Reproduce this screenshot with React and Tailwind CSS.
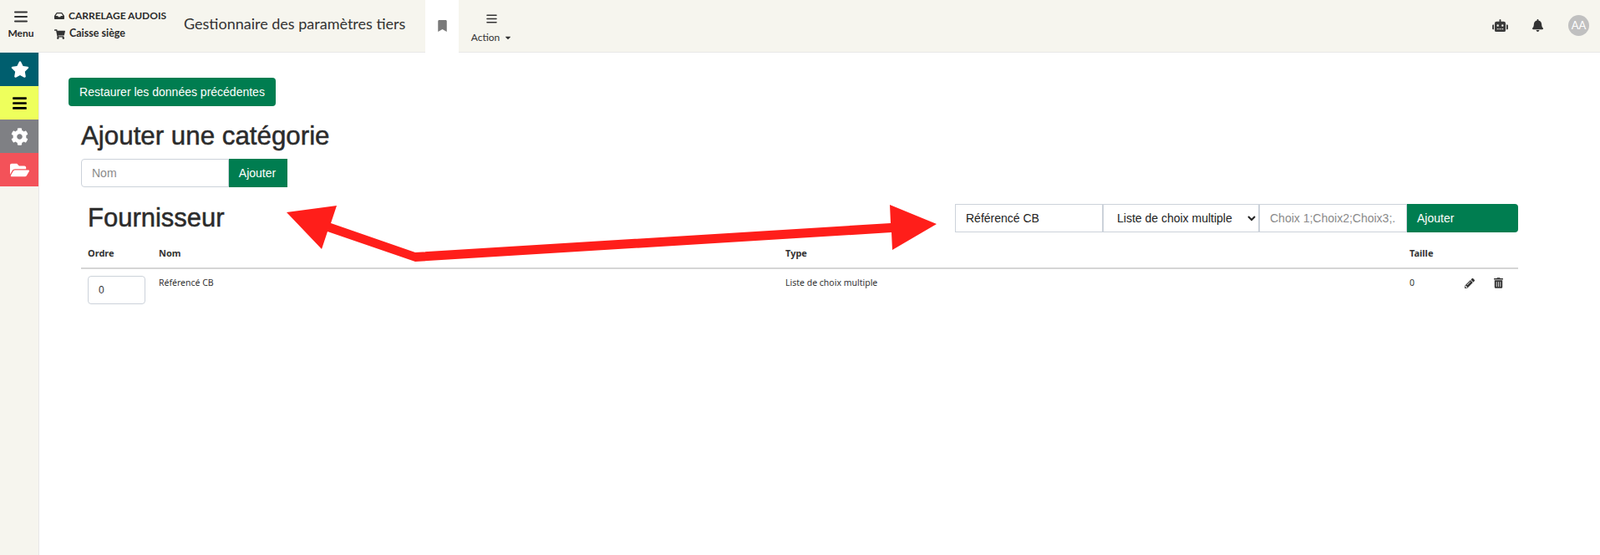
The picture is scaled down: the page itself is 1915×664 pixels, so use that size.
import React from "react";
import { FaStar, FaBars, FaCog, FaFolderOpen, FaBookmark, FaRobot, FaBell, FaPencilAlt, FaTrashAlt, FaInbox, FaShoppingCart, FaCaretDown } from "react-icons/fa";

function Burger({ className }) {
  return (
    <svg viewBox="0 0 16 14" className={className} fill="none" stroke="currentColor" strokeWidth="2" strokeLinecap="round">
      <path d="M1 1.5h14M1 7h14M1 12.5h14" />
    </svg>
  );
}

function Arrow() {
  return (
    <svg viewBox="343 245 778 68" className="absolute left-[343px] top-[245px] w-[778px] h-[68px] pointer-events-none">
      <polygon
        fill="#ff1e1a"
        points="343,254 403,246 396,267 497,302 1066,267 1065,245 1121,268 1068,299 1067,278 497,313 392,277 385,298"
      />
    </svg>
  );
}

const sideItems = [
  { bg: "bg-[#005e6e]", color: "text-white", Icon: FaStar, size: "text-[22px] pl-[1px]" },
  { bg: "bg-[#eeff5c]", color: "text-black", Icon: FaBars, size: "text-[19px]" },
  { bg: "bg-[#7f8084]", color: "text-white", Icon: FaCog, size: "text-[21px]" },
  { bg: "bg-[#f35259]", color: "text-white", Icon: FaFolderOpen, size: "text-[23px]" },
];

export default function App() {
  return (
    <div className="relative min-h-screen bg-white text-[#2b2b2b] font-['Liberation_Sans',sans-serif]">
      <header className="flex h-[63px] items-stretch bg-[#f6f5ee] border-b border-[#e8e8e8] font-['Lato',sans-serif]">
        <div className="w-[50px] flex flex-col items-center pt-[13px]">
          <Burger className="w-[16px] h-[14px] text-[#333]" />
          <span className="mt-[5px] text-[12px] font-bold leading-[15px]">Menu</span>
        </div>
        <div className="ml-[15px] w-[155px] flex flex-col pt-[11px] font-bold">
          <div className="flex items-center h-[15px]">
            <FaInbox className="w-[12px] h-[12px] text-[#333]" />
            <span className="ml-[5px] text-[12px] whitespace-nowrap">CARRELAGE AUDOIS</span>
          </div>
          <div className="flex items-center h-[15px] mt-[7px]">
            <FaShoppingCart className="w-[13px] h-[12px] text-[#333]" />
            <span className="ml-[5px] text-[12.5px] whitespace-nowrap">Caisse siège</span>
          </div>
        </div>
        <div className="w-[289px] flex items-center h-[57px] text-[18px] text-[#333] whitespace-nowrap">
          Gestionnaire des paramètres tiers
        </div>
        <div className="w-[40px] h-[63px] bg-white flex items-center justify-center pb-[1px]">
          <FaBookmark className="w-[11px] h-[14px] text-[#7a7a7a]" />
        </div>
        <div className="ml-[17px] w-[45px] flex flex-col items-center pt-[17px]">
          <Burger className="w-[13px] h-[11px] text-[#333]" />
          <span className="mt-[9px] flex items-center text-[12px] leading-[15px] text-[#333]">
            Action
            <FaCaretDown className="ml-[5px] w-[10px] h-[10px]" />
          </span>
        </div>
        <div className="ml-auto flex items-center pb-[1px] pr-[13px]">
          <FaRobot className="w-[19px] h-[15px] text-[#3a3a3a]" />
          <FaBell className="ml-[29px] w-[13px] h-[15px] text-[#333]" />
          <div className="ml-[30px] w-[25px] h-[25px] rounded-full bg-[#c0c0c0] text-white text-[13px] flex items-center justify-center">
            AA
          </div>
        </div>
      </header>

      <div className="flex min-h-[601px]">
        <aside className="w-[47px] shrink-0 bg-[#f6f5ee] border-r border-[#e8e8e8]">
          {sideItems.map(({ bg, color, Icon, size }, i) => (
            <div key={i} className={`h-[40px] flex items-center justify-center ${bg} ${color} ${size}`}>
              <Icon />
            </div>
          ))}
        </aside>

        <main className="flex-1 pl-[35px] pr-[98px] pt-[30px]">
          <button className="h-[34px] w-[248px] rounded-[4px] bg-[#007d50] text-white text-[14px] flex items-center justify-center">
            Restaurer les données précédentes
          </button>

          <div className="ml-[15px]">
            <h2 className="mt-[14px] mb-[5px] text-[31.3px] leading-[44px] font-normal [-webkit-text-stroke:0.5px_#2b2b2b]">Ajouter une catégorie</h2>
            <div className="flex h-[34px] w-[247px]">
              <input
                placeholder="Nom"
                className="w-[177px] border border-[#ccd2da] rounded-l-[4px] px-3 text-[14px] outline-none placeholder:text-[#8a8a8a]"
              />
              <button className="w-[70px] bg-[#007d50] text-white text-[14px] pr-[2px]">Ajouter</button>
            </div>

            <div className="mt-[20px] flex items-center justify-between h-[34px]">
              <h3 className="pl-[8px] text-[31px] leading-[34px] font-normal [-webkit-text-stroke:0.5px_#2b2b2b]">Fournisseur</h3>
              <div className="flex h-[34px]">
                <input
                  defaultValue="Référencé CB"
                  className="w-[177px] border border-[#ccd2da] px-3 text-[14px] text-[#222] outline-none"
                />
                <select defaultValue="m" className="w-[187px] border border-[#ccd2da] pl-[12px] pr-[2px] text-[14px] text-[#222] bg-white outline-none">
                  <option value="m">Liste de choix multiple</option>
                </select>
                <input
                  placeholder="Choix 1;Choix2;Choix3;..."
                  className="w-[177px] border border-[#ccd2da] px-3 text-[14px] outline-none placeholder:text-[#8a8a8a]"
                />
                <button className="w-[133px] bg-[#007d50] text-white text-[14px] text-left pl-[12px] rounded-r-[4px]">Ajouter</button>
              </div>
            </div>

            <table className="mt-[8px] w-full table-fixed text-[10.5px] font-['Noto_Sans',sans-serif] text-[#333]">
              <thead>
                <tr className="border-b-2 border-[#d5d5d5] h-[35px] text-[11px]">
                  <th className="w-[85px] pl-[8px] text-left font-bold">Ordre</th>
                  <th className="w-[750px] pl-[8px] text-left font-bold">Nom</th>
                  <th className="w-[747px] pl-[8px] text-left font-bold">Type</th>
                  <th className="w-[71px] pl-[8px] text-left font-bold">Taille</th>
                  <th></th>
                </tr>
              </thead>
              <tbody>
                <tr className="align-top">
                  <td className="pl-[8px] pt-[8px]">
                    <input
                      defaultValue="0"
                      className="w-[69px] h-[34px] rounded-[4px] border border-[#ccd2da] px-[12px] text-[12px] font-['Liberation_Sans',sans-serif] outline-none"
                    />
                  </td>
                  <td className="pl-[8px] pt-[9px]">Référencé CB</td>
                  <td className="pl-[8px] pt-[9px]">Liste de choix multiple</td>
                  <td className="pl-[8px] pt-[9px]">0</td>
                  <td className="pt-[10px]">
                    <div className="flex items-center pl-[3px]">
                      <FaPencilAlt className="w-[12px] h-[12px]" />
                      <FaTrashAlt className="ml-[23px] w-[11px] h-[13px]" />
                    </div>
                  </td>
                </tr>
              </tbody>
            </table>
          </div>
        </main>
      </div>

      <Arrow />
    </div>
  );
}
